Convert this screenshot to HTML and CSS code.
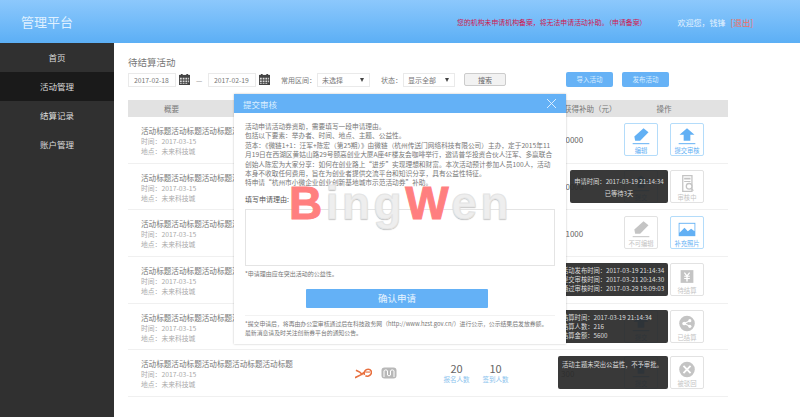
FILE: index.html
```html
<!DOCTYPE html>
<html>
<head>
	<title>管理平台</title>
	<meta name="viewport" content="width=device-width">
	<link rel="stylesheet" href="styles.css">
</head>
<body>
	<svg class="iconDefs" width="0" height="0">
		<symbol id="icCalendar" viewBox="0 0 12 12">
			<path fill="#444" d="M0 1h12v11H0z"/>
			<path fill="#ddd" d="M1 4h2v2H1zM4 4h2v2H4zM7 4h2v2H7zM10 4h1v2h-1zM1 7h2v2H1zM4 7h2v2H4zM7 7h2v2H7zM10 7h1v2h-1zM1 10h2v1H1zM4 10h2v1H4zM7 10h2v1H7z"/>
			<path fill="#444" d="M2 0h2v2H2zM8 0h2v2H8z"/>
		</symbol>
		<symbol id="icEdit" viewBox="0 0 24 20">
			<path d="M15 0l6 5-10 10H5L4 10z"/>
			<path d="M2 18h20v1.200H2z"/>
		</symbol>
		<symbol id="icUpload" viewBox="0 0 24 20">
			<path d="M12 0l9 8h-5v7H8V8H3z"/>
			<path d="M2 18h20v1.200H2z"/>
		</symbol>
		<symbol id="icPhoto" viewBox="0 0 24 20">
			<path d="M2 2h20v16H2z"/>
			<path fill="#fff" d="M3 3h18v9l-4-3-4 3-4-4-6 6z"/>
		</symbol>
		<symbol id="icAudit" viewBox="0 0 24 24">
			<path fill="none" stroke="#c4c4c4" stroke-width="1.800" d="M6 1h13v22H6z"/>
			<path d="M8 4h9v2.500H8zM8 8.500h9V10H8z"/>
			<circle cx="15" cy="16" r="4" fill="#fff" stroke="#c4c4c4" stroke-width="1.800"/>
			<path stroke="#c4c4c4" stroke-width="1.800" d="M18 19l3 3"/>
		</symbol>
		<symbol id="icSettle" viewBox="0 0 24 24">
			<path d="M3 3h18v18H3z"/>
			<path fill="#fff" d="M9 6l3 4 3-4 1.400 1-3 4H16v1.500h-3V14h3v1.500h-3V19h-2v-3.500H8V14h3v-1.500H8V11h2.600l-3-4z"/>
		</symbol>
		<symbol id="icShare" viewBox="0 0 24 24">
			<circle cx="12" cy="12" r="11"/>
			<path stroke="#fff" stroke-width="1.500" d="M8 12l8-4M8 12l8 4"/>
			<circle cx="8" cy="12" r="2.600" fill="#fff"/>
			<circle cx="16" cy="8" r="2.200" fill="#fff"/>
			<circle cx="16" cy="16" r="2.200" fill="#fff"/>
		</symbol>
		<symbol id="icReject" viewBox="0 0 24 24">
			<circle cx="12" cy="12" r="11"/>
			<path stroke="#fff" stroke-width="2.600" d="M7 7l10 10M17 7L7 17"/>
		</symbol>
		<symbol id="logoMonkey" viewBox="0 0 18 12">
			<path fill="none" stroke="#e8703f" stroke-width="1.700" d="M0 11l6-3 4-3M1 3l4 2 3 3M10 8c-1-3 1-6 4-6s4 3 3 5-4 3-6 2"/>
			<path fill="none" stroke="#e8703f" stroke-width="1.200" d="M11 5h5"/>
		</symbol>
		<symbol id="logoArch" viewBox="0 0 16 12">
			<rect x="0.500" y="0.500" width="15" height="11" rx="3" fill="#b8b8b8"/>
			<path fill="none" stroke="#fff" stroke-width="1" d="M3 10V4c0-1.500 3.500-1.500 3.500 0v4M6.500 8c0 1 3 1 3 0V4c0-1.500 3.500-1.500 3.500 0v6"/>
		</symbol>
	</svg>

	<header class="topBar">
		<h1 class="siteTitle">管理平台</h1>
		<p class="topNotice">您的机构未申请机构备案，将无法申请活动补助。（申请备案）</p>
		<p class="topUser">欢迎您，钱锋<a class="logoutLink" href="#">[退出]</a></p>
	</header>

	<div class="pageBody">
		<nav class="sideMenu">
			<a href="#">首页</a>
			<a class="active" href="#">活动管理</a>
			<a href="#">结算记录</a>
			<a href="#">账户管理</a>
		</nav>

		<main class="mainArea">
			<h2 class="pageTitle">待结算活动</h2>

			<div class="filterBar">
				<input class="dateInput" value="2017-02-18">
				<svg class="calIcon"><use href="#icCalendar"/></svg>
				<span class="dash">—</span>
				<input class="dateInput" value="2017-02-19">
				<svg class="calIcon"><use href="#icCalendar"/></svg>
				<label class="filterLabel rangeLabel">常用区间：</label>
				<div class="selectBox rangeBox"><select><option>未选择</option></select></div>
				<label class="filterLabel stateLabel">状态：</label>
				<div class="selectBox"><select><option>显示全部</option></select></div>
				<button class="searchButton">搜索</button>
				<a class="blueButton importButton" href="#">导入活动</a>
				<a class="blueButton" href="#">发布活动</a>
			</div>

			<div class="activityTable">
				<div class="tableHead">
					<span class="headSummary">概要</span>
					<span></span>
					<span></span>
					<span class="headMoney">获得补助（元）</span>
					<span class="headActions">操作</span>
				</div>

				<div class="tableRow">
					<div class="summary">
						<div class="summaryTitle">活动标题活动标题活动标题活动标题活动标题</div>
						<div class="summaryInfo">时间：2017-03-15</div>
						<div class="summaryInfo">地点：未来科技城</div>
					</div>
					<div></div><div></div>
					<div class="money">50000</div>
					<div class="actions">
						<a class="actionButton" href="#"><svg><use href="#icEdit"/></svg>编辑</a>
						<a class="actionButton" href="#"><svg><use href="#icUpload"/></svg>提交审核</a>
					</div>
				</div>

				<div class="tableRow">
					<div class="summary">
						<div class="summaryTitle">活动标题活动标题活动标题活动标题活动标题</div>
						<div class="summaryInfo">时间：2017-03-15</div>
						<div class="summaryInfo">地点：未来科技城</div>
					</div>
					<div></div><div></div>
					<div class="money">20000</div>
					<div class="actions">
						<a class="actionButton" href="#"><svg><use href="#icUpload"/></svg>提交</a>
						<a class="actionButton off" href="#"><svg><use href="#icAudit"/></svg>审核中</a>
					</div>
					<div class="rowTip centered">
						<div>申请时间：2017-03-19 21:14:34</div>
						<div>已等待3天</div>
					</div>
				</div>

				<div class="tableRow">
					<div class="summary">
						<div class="summaryTitle">活动标题活动标题活动标题活动标题活动标题</div>
						<div class="summaryInfo">时间：2017-03-15</div>
						<div class="summaryInfo">地点：未来科技城</div>
					</div>
					<div></div><div></div>
					<div class="money">21000</div>
					<div class="actions">
						<a class="actionButton off" href="#"><svg><use href="#icEdit"/></svg>不可编辑</a>
						<a class="actionButton" href="#"><svg><use href="#icPhoto"/></svg>补充照片</a>
					</div>
				</div>

				<div class="tableRow">
					<div class="summary">
						<div class="summaryTitle">活动标题活动标题活动标题活动标题活动标题</div>
						<div class="summaryInfo">时间：2017-03-15</div>
						<div class="summaryInfo">地点：未来科技城</div>
					</div>
					<div></div><div></div>
					<div class="money">10000</div>
					<div class="actions">
						<a class="actionButton" href="#"><svg><use href="#icUpload"/></svg>提交</a>
						<a class="actionButton off" href="#"><svg><use href="#icSettle"/></svg>待结算</a>
					</div>
					<div class="rowTip wide">
						<div>活动发布时间：2017-03-19 21:14:34</div>
						<div>提交审核时间：2017-03-21 20:14:30</div>
						<div>通过审核时间：2017-03-29 19:09:03</div>
					</div>
				</div>

				<div class="tableRow">
					<div class="summary">
						<div class="summaryTitle">活动标题活动标题活动标题活动标题活动标题</div>
						<div class="summaryInfo">时间：2017-03-15</div>
						<div class="summaryInfo">地点：未来科技城</div>
					</div>
					<div></div><div></div>
					<div class="money">10000</div>
					<div class="actions">
						<a class="actionButton" href="#"><svg><use href="#icUpload"/></svg>提交</a>
						<a class="actionButton off" href="#"><svg><use href="#icShare"/></svg>已结算</a>
					</div>
					<div class="rowTip wide">
						<div>结算时间：2017-03-19 21:14:34</div>
						<div>结算人数：216</div>
						<div>结算金额：5600</div>
					</div>
				</div>

				<div class="tableRow">
					<div class="summary">
						<div class="summaryTitle">活动标题活动标题活动标题活动标题活动标题</div>
						<div class="summaryInfo">时间：2017-03-15</div>
						<div class="summaryInfo">地点：未来科技城</div>
					</div>
					<div class="logos">
						<svg class="logoOne"><use href="#logoMonkey"/></svg>
						<svg class="logoTwo"><use href="#logoArch"/></svg>
					</div>
					<div class="counts">
						<div class="countItem"><b>20</b><span>报名人数</span></div>
						<div class="countItem"><b>10</b><span>签到人数</span></div>
					</div>
					<div class="money">300</div>
					<div class="actions">
						<a class="actionButton" href="#"><svg><use href="#icUpload"/></svg>提交</a>
						<a class="actionButton off" href="#"><svg><use href="#icReject"/></svg>被驳回</a>
					</div>
					<div class="rowTip wide rejectTip">
						<div>活动主题未突出公益性，不予审批。</div>
					</div>
				</div>
			</div>
		</main>
	</div>

	<section class="applyDialog">
		<div class="dialogHead">
			<span>提交审核</span>
			<svg class="dialogClose" viewBox="0 0 10 10"><path d="M0 0l10 10M10 0L0 10"/></svg>
		</div>
		<div class="dialogBody">
			<div class="dialogText">
				<p>活动申请活动券资助，需要填写一段申请理由。</p>
				<p>包括以下要素：举办者、时间、地点、主题、公益性。</p>
				<p>范本：《微链1+1：汪军+陈宏（第25期）》由微链（杭州传送门网络科技有限公司）主办，定于2015年11月19日在西湖区黄姑山路29号颐高创业大厦A座4F楼友会咖啡举行，邀请普华投资合伙人汪军、多赢联合创始人陈宏为大家分享：如何在创业路上“进步”实现理想和财富。本次活动预计参加人员100人，活动本身不收取任何费用，旨在为创业者提供交流平台和知识分享，具有公益性特征。</p>
				<p>特申请“杭州市小微企业创业创新基地城市示范活动券”补助。</p>
			</div>
			<label class="reasonLabel">填写申请理由:</label>
			<textarea class="reasonInput"></textarea>
			<p class="reasonNote">*申请理由应在突出活动的公益性。</p>
			<button class="confirmButton">确认申请</button>
			<p class="dialogFoot">*提交申请后，将再由办公室审核通过后在科技政务网（http://www.hzst.gov.cn/）进行公示，公示结果后发放券额。<br>最新消息请及时关注创新券平台的通知公告。</p>
		</div>
	</section>

	<div class="waterMark"><span class="markRed">B</span>ing<span class="markRed">W</span>en</div>
</body>
</html>
```

FILE: styles.css
```css
/* page */
body {
	margin: 0;
	height: 417px;
	overflow: hidden;
	background-color: #fff;
	color: #666;
	font-family: "Noto Sans CJK SC", sans-serif;
	font-size: 8px;
}

a {
	text-decoration: none;
}

p, h1, h2 {
	margin: 0;
	font-weight: normal;
}

.iconDefs {
	position: absolute;
}

/* top bar */
.topBar {
	display: flex;
	align-items: center;
	height: 43px;
	background: linear-gradient(#8cc8fc, #5cafF5);
	color: #fff;
}

.siteTitle {
	margin-left: 21px;
	font-size: 13px;
	color: #dff0ff;
}

.topNotice {
	margin-left: 384px;
	font-size: 6.900px;
	color: #d0164f;
}

.topUser {
	margin-left: 31px;
	font-size: 8px;
	color: #e6f3ff;
}

.logoutLink {
	margin-left: 5px;
	font-size: 8.500px;
	color: #ef6f62;
}

/* side menu */
.pageBody {
	display: flex;
	height: 374px;
}

.sideMenu {
	flex: 0 0 114px;
	background-color: #303030;
}

.sideMenu a {
	display: block;
	height: 29px;
	line-height: 29px;
	text-align: center;
	font-size: 8.500px;
	color: #ddd;
}

.sideMenu a.active {
	background-color: #1a1a1a;
}

/* main area */
.mainArea {
	flex: 1;
	padding-left: 14px;
}

.pageTitle {
	margin-top: 12px;
	height: 17px;
	line-height: 15px;
	font-size: 9.500px;
	color: #777;
}

.filterBar {
	display: flex;
	align-items: center;
	width: 541px;
	height: 15px;
}

.dateInput {
	box-sizing: border-box;
	width: 48px;
	height: 14px;
	padding: 0 0 0 5px;
	border: 1px solid #eaeaea;
	outline: none;
	font-family: inherit;
	font-size: 6.800px;
	color: #777;
}

.calIcon {
	width: 11px;
	height: 11px;
	margin-left: 3px;
}

.dash {
	width: 12px;
	margin-left: 6px;
	font-size: 7px;
	color: #888;
}

.filterLabel {
	font-size: 7px;
	color: #777;
	white-space: nowrap;
}

.rangeLabel {
	margin-left: 11px;
	width: 36px;
}

.stateLabel {
	margin-left: 11px;
	width: 22px;
}

.selectBox {
	position: relative;
	box-sizing: border-box;
	width: 52px;
	height: 14px;
	border: 1px solid #eaeaea;
}

.rangeBox {
	width: 53px;
}

.selectBox select {
	appearance: none;
	width: 100%;
	height: 12px;
	padding: 0 0 0 4px;
	border: none;
	outline: none;
	background: none;
	font-family: inherit;
	font-size: 7px;
	color: #777;
}

.selectBox::after {
	content: "";
	position: absolute;
	right: 5px;
	top: 4px;
	border-left: 2.500px solid transparent;
	border-right: 2.500px solid transparent;
	border-top: 4px solid #444;
}

.searchButton {
	width: 42px;
	height: 13px;
	margin-left: 9px;
	padding: 0;
	border: 1px solid #ccc;
	border-radius: 2px;
	background-color: #f2f2f2;
	font-family: inherit;
	font-size: 7px;
	color: #666;
}

.blueButton {
	width: 47px;
	height: 15px;
	line-height: 15px;
	margin-left: 9px;
	border-radius: 2px;
	background-color: #66b2f6;
	text-align: center;
	font-size: 6.500px;
	color: #d9edff;
}

.blueButton.importButton {
	margin-left: auto;
}

/* table */
.activityTable {
	width: 600px;
	margin-top: 13px;
}

.tableHead,
.tableRow {
	display: grid;
	grid-template-columns: 212px 80px 100px 92px 104px;
	padding-right: 12px;
}

.tableHead {
	height: 17px;
	line-height: 17px;
	background-color: #e2e2e2;
	font-size: 7.500px;
	color: #777;
}

.headSummary {
	padding-left: 36px;
}

.headMoney {
	padding-left: 44px;
	white-space: nowrap;
}

.headActions {
	text-align: center;
}

.tableRow {
	position: relative;
	box-sizing: border-box;
	height: 46.670px;
	border-bottom: 1px solid #f0f0f0;
}

.summary {
	padding: 8px 0 0 13px;
	white-space: nowrap;
}

.summaryTitle {
	height: 11px;
	line-height: 11px;
	font-size: 7.600px;
	color: #777;
}

.summaryInfo {
	height: 10px;
	line-height: 10px;
	font-size: 6.800px;
	color: #aaa;
}

.logos {
	display: flex;
	align-items: center;
	gap: 9px;
	padding-left: 15px;
}

.logoOne {
	width: 17px;
	height: 12px;
}

.logoTwo {
	width: 16px;
	height: 12px;
}

.counts {
	display: flex;
	align-items: center;
	gap: 12px;
	padding-left: 23px;
}

.countItem {
	display: flex;
	flex-direction: column;
	align-items: center;
	width: 27px;
}

.countItem b {
	line-height: 13px;
	font-weight: normal;
	font-size: 11px;
	color: #666;
}

.countItem span {
	line-height: 9px;
	font-size: 6.500px;
	color: #8cc4ee;
	white-space: nowrap;
}

.money {
	align-self: center;
	padding-left: 41px;
	font-size: 8px;
	color: #666;
}

.actions {
	display: flex;
	justify-content: center;
	gap: 12px;
	padding-top: 6px;
}

.actionButton {
	display: flex;
	flex-direction: column;
	align-items: center;
	box-sizing: border-box;
	width: 34px;
	height: 33px;
	padding-top: 4px;
	border: 1px solid #b4dcfa;
	border-radius: 2px;
	color: #62b0f4;
	font-size: 6.300px;
	line-height: 9px;
	white-space: nowrap;
}

.actionButton svg {
	width: 20px;
	height: 17px;
	margin-bottom: 1px;
	fill: #62b0f4;
}

.actionButton.off {
	border-color: #e2e2e2;
	color: #c4c4c4;
}

.actionButton.off svg {
	fill: #c4c4c4;
}

/* dark tip over a row's first button */
.rowTip {
	position: absolute;
	top: 6px;
	right: 60px;
	box-sizing: border-box;
	width: 98px;
	height: 33px;
	padding: 3px 4px;
	border-radius: 2px;
	background-color: rgba(42, 42, 42, 0.93);
	color: #ddd;
	font-size: 6.300px;
	line-height: 9px;
	white-space: nowrap;
}

.rowTip.centered {
	padding-top: 6px;
	line-height: 12px;
	text-align: center;
}

.rowTip.wide {
	width: 110px;
}

.rowTip.rejectTip {
	padding: 4px 0 0 4px;
}

/* dialog */
.applyDialog {
	position: absolute;
	left: 234px;
	top: 94px;
	width: 332px;
	height: 250px;
	background-color: #fff;
	box-shadow: 0 0 2px rgba(0, 0, 0, 0.25);
}

.dialogHead {
	display: flex;
	align-items: center;
	justify-content: space-between;
	height: 19px;
	padding: 0 10px 0 9px;
	background-color: #64b1f6;
	font-size: 8.500px;
	color: #dcefff;
}

.dialogClose {
	width: 9px;
	height: 9px;
	stroke: #e8f4ff;
	stroke-width: 1;
}

.dialogBody {
	padding: 9px 11px 0;
}

.dialogText {
	font-size: 6.700px;
	line-height: 9.400px;
	color: #777;
}

.reasonLabel {
	display: block;
	margin-top: 6px;
	height: 10px;
	line-height: 10px;
	font-size: 7px;
	color: #555;
}

.reasonInput {
	display: block;
	box-sizing: border-box;
	width: 310px;
	height: 57px;
	margin-top: 5px;
	border: 1px solid #e4e4e4;
	outline: none;
	resize: none;
}

.reasonNote {
	margin-top: 3px;
	line-height: 10px;
	font-size: 6px;
	color: #777;
}

.confirmButton {
	display: block;
	width: 182px;
	height: 19px;
	margin: 10px 0 0 61px;
	padding: 0;
	border: none;
	border-radius: 1px;
	background-color: #64b1f6;
	font-family: inherit;
	font-size: 9.500px;
	color: #e8f4ff;
}

.dialogFoot {
	margin-top: 7px;
	padding-top: 3px;
	border-top: 1px solid #f2f2f2;
	font-size: 5.850px;
	line-height: 9.500px;
	color: #777;
	white-space: nowrap;
}

/* watermark over the dialog */
.waterMark {
	position: absolute;
	left: 289px;
	top: 171px;
	font-family: "Liberation Sans", sans-serif;
	font-weight: bold;
	font-size: 46px;
	line-height: 64px;
	letter-spacing: 3.500px;
	color: #eee;
	text-shadow: 0 1px 1px #aaa;
	-webkit-text-stroke: 1px #e4e4e4;
}

.markRed {
	color: #ff7f7f;
	text-shadow: none;
	-webkit-text-stroke: 1px #ff7f7f;
}
```
